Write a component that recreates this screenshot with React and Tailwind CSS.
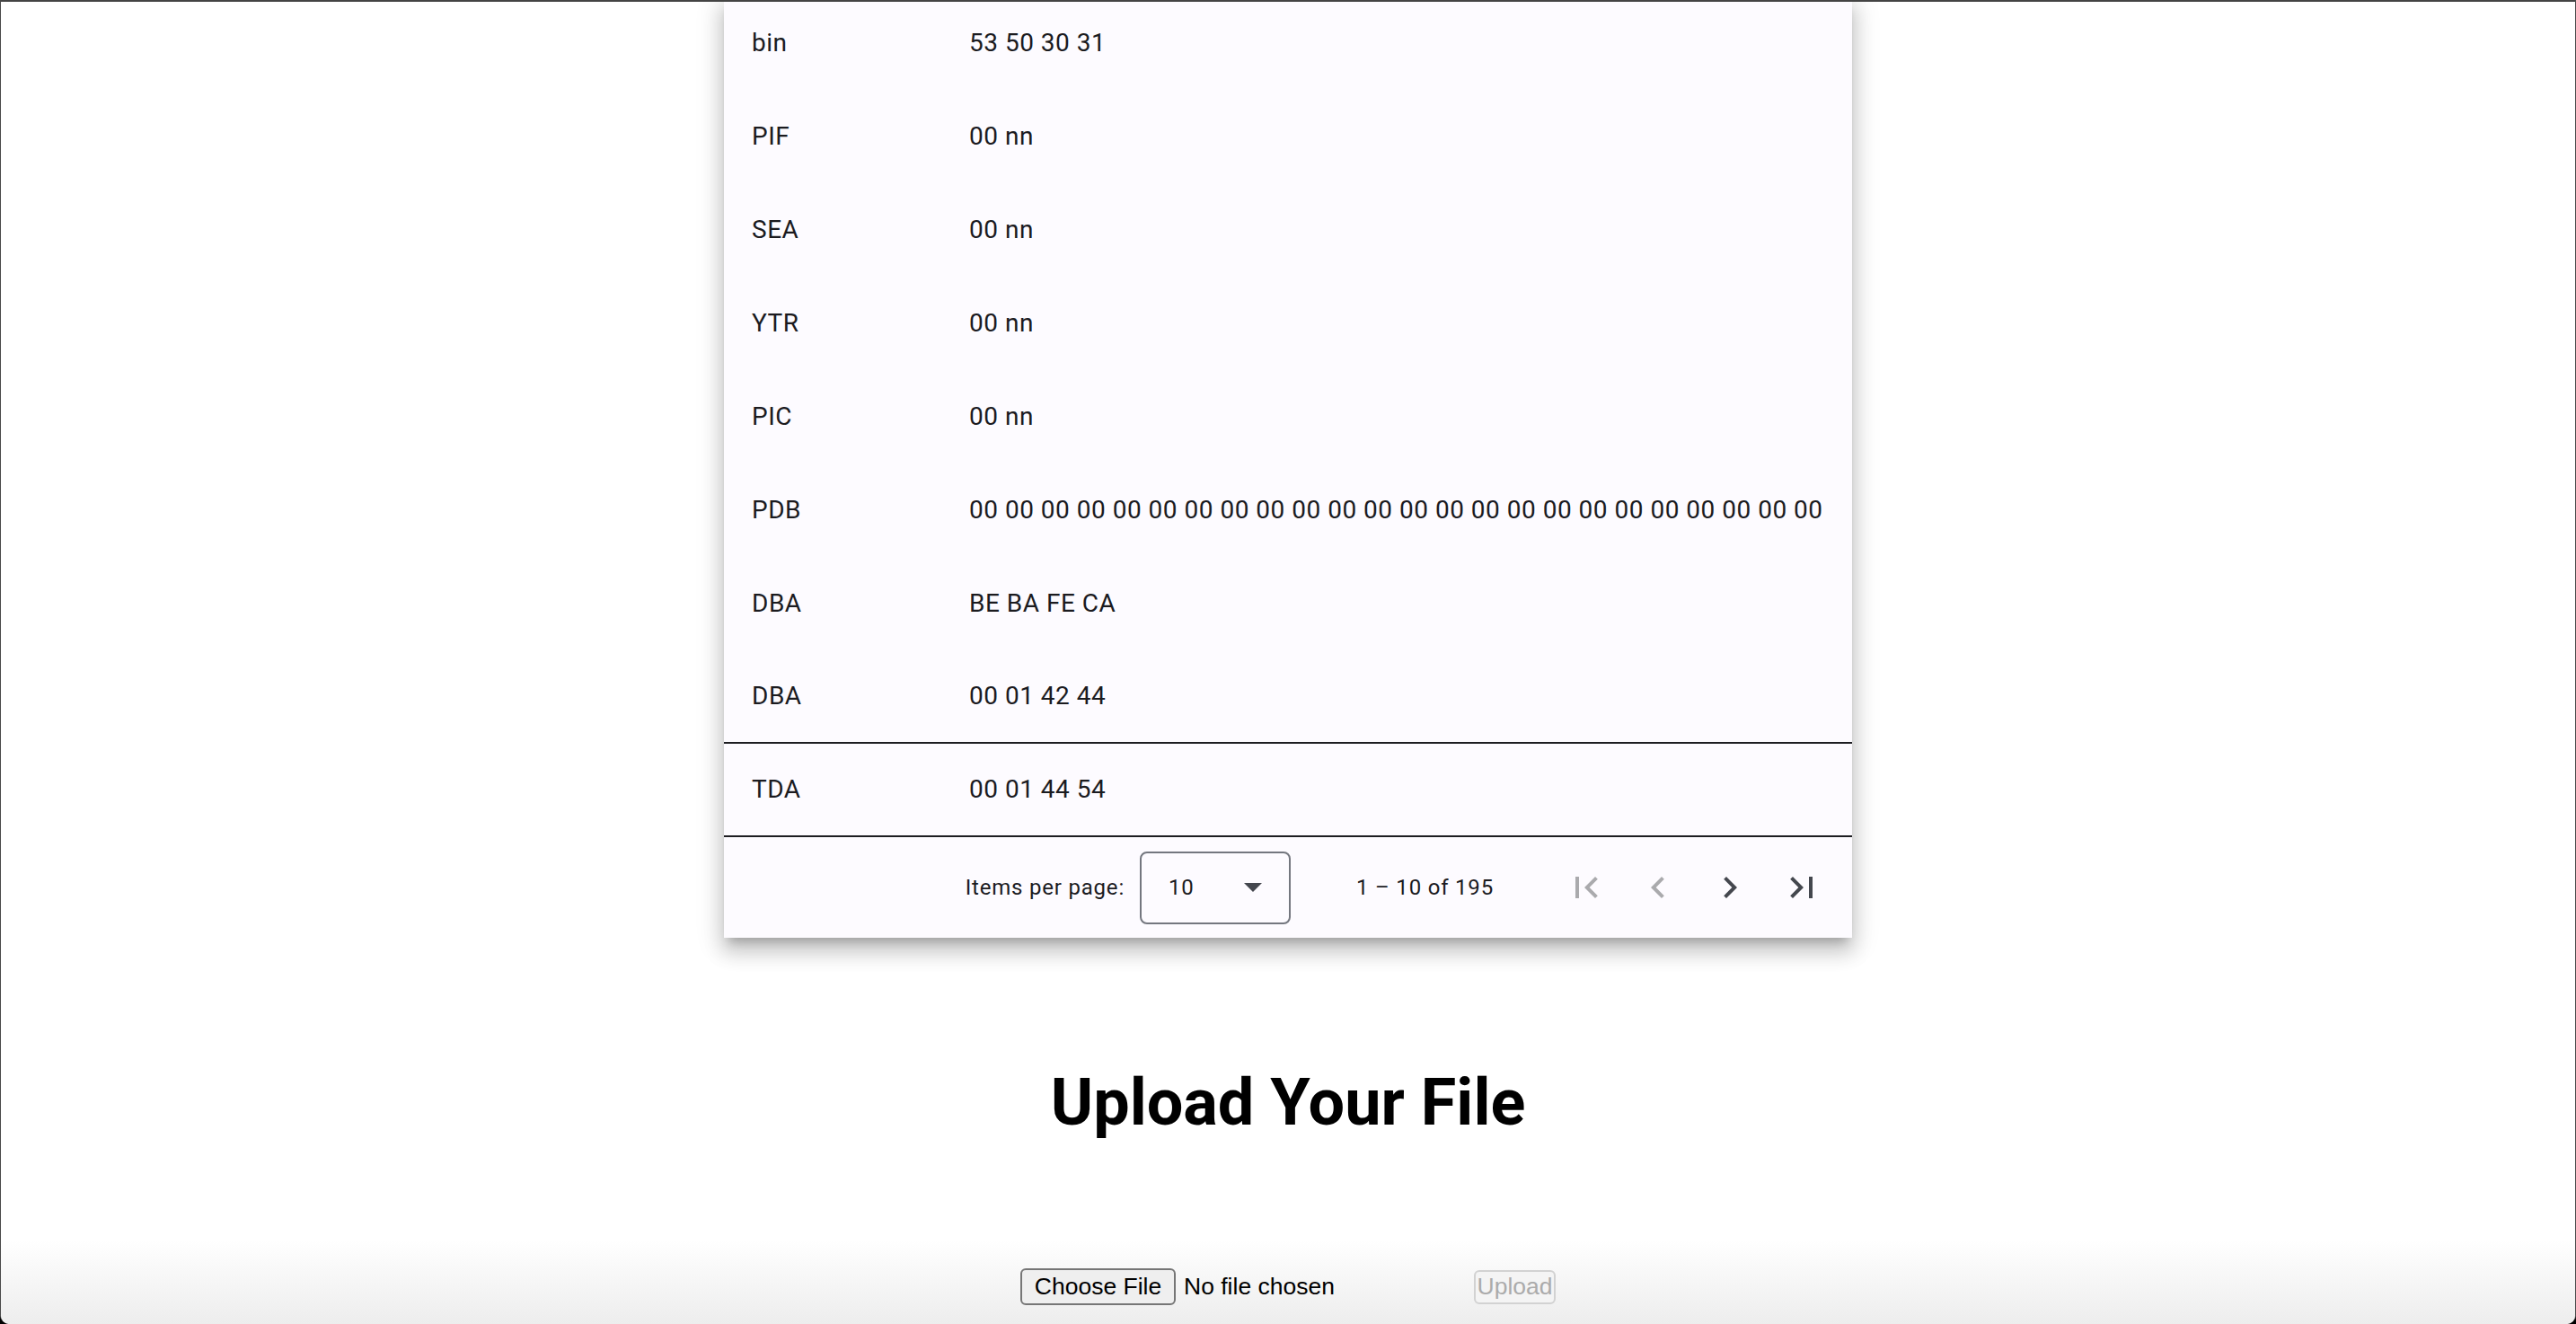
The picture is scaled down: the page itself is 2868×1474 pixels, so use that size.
import React from "react";

const rows = [
  ["bin", "53 50 30 31", false],
  ["PIF", "00 nn", false],
  ["SEA", "00 nn", false],
  ["YTR", "00 nn", false],
  ["PIC", "00 nn", false],
  ["PDB", Array(24).fill("00").join(" "), false],
  ["DBA", "BE BA FE CA", false],
  ["DBA", "00 01 42 44", true],
  ["TDA", "00 01 44 54", true],
];

function Icon({ d, color }) {
  return (
    <svg width="48" height="48" viewBox="0 0 24 24" fill={color}>
      <path d={d} />
    </svg>
  );
}

export default function App() {
  return (
    <div className="h-[1474px] w-full bg-black overflow-hidden">
      <div className="h-full w-full bg-white rounded-b-[10px] flex flex-col border-x border-[#4a4a4a] overflow-hidden">
        <div className="h-[2px] w-full bg-[#444444] shrink-0" />
        <div className="flex-1 flex flex-col overflow-hidden font-['Roboto',sans-serif]">
          <div className="mt-[-6px] mx-auto w-[1256px] shrink-0 bg-[#fdfbff] text-[#1b1b1f] shadow-[0_10px_10px_-6px_rgba(0,0,0,0.2),0_16px_20px_2px_rgba(0,0,0,0.14),0_6px_28px_4px_rgba(0,0,0,0.12)]">
            {rows.map(([k, v, border], i) => (
              <div
                key={i}
                className={
                  "h-[104px] flex items-center text-[28px] tracking-[0.5px] " +
                  (border ? "border-b-2 border-[#1d1d21]" : "")
                }
              >
                <div className="w-[273px] pl-[31px] shrink-0">{k}</div>
                <div className="whitespace-nowrap">{v}</div>
              </div>
            ))}
            <div className="h-[112px] flex items-center justify-end pr-[16px] text-[24px] tracking-[0.8px]">
              <div className="mr-[17px] whitespace-nowrap">Items per page:</div>
              <div className="w-[168px] h-[81px] mr-[73px] border-2 border-[#74777f] rounded-[8px] flex items-center pl-[30px] pr-[30px] justify-between">
                <span>10</span>
                <svg width="20" height="10" viewBox="0 0 20 10">
                  <polygon points="0,0 20,0 10,10" fill="#44474e" />
                </svg>
              </div>
              <div className="w-[152px] mr-[64px] whitespace-nowrap">1 – 10 of 195</div>
              <div className="flex">
                <div className="w-[80px] h-[80px] flex items-center justify-center">
                  <Icon color="#aaaaad" d="M18.41 16.59L13.82 12l4.59-4.59L17 6l-6 6 6 6zM6 6h2v12H6z" />
                </div>
                <div className="w-[80px] h-[80px] flex items-center justify-center">
                  <Icon color="#aaaaad" d="M15.41 7.41L14 6l-6 6 6 6 1.41-1.41L10.83 12z" />
                </div>
                <div className="w-[80px] h-[80px] flex items-center justify-center">
                  <Icon color="#44474e" d="M10 6L8.59 7.41 13.17 12l-4.58 4.59L10 18l6-6z" />
                </div>
                <div className="w-[80px] h-[80px] flex items-center justify-center">
                  <Icon color="#44474e" d="M5.59 7.41L10.18 12l-4.59 4.59L7 18l6-6-6-6zM16 6h2v12h-2z" />
                </div>
              </div>
            </div>
          </div>

          <h1 className="mt-[142px] h-[84px] leading-[84px] text-center text-[72px] font-bold text-black shrink-0">
            Upload Your File
          </h1>

          <div className="mt-auto h-[94px] w-full shrink-0 bg-gradient-to-b from-white to-[#ededed] flex justify-center items-start pt-[32px] font-['Liberation_Sans',Arial,sans-serif] text-[26.5px]">
            <div className="w-[505px] flex items-center">
              <div className="h-[41px] w-[173px] flex items-center justify-center bg-[#efefef] border-2 border-[#767676] rounded-[6px] text-black leading-none">
                Choose File
              </div>
              <div className="ml-[9px] text-black leading-none whitespace-nowrap">No file chosen</div>
            </div>
            <div className="h-[38px] mt-[1.5px] w-[91px] flex items-center justify-center bg-[#f4f4f4] border-2 border-[#d2d2d2] rounded-[6px] text-[#ababab] leading-none">
              Upload
            </div>
          </div>
        </div>
      </div>
    </div>
  );
}
